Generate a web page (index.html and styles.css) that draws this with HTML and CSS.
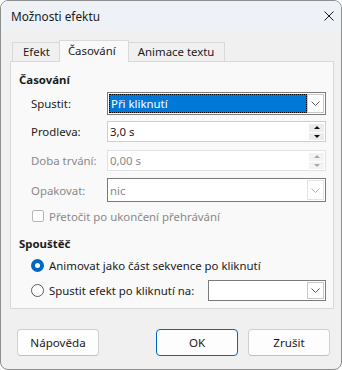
FILE: index.html
```html
<!DOCTYPE html>
<html lang="cs">
<head>
  <meta charset="UTF-8">
  <title>Možnosti efektu</title>
  <link rel="stylesheet" href="styles.css">
</head>
<body>
  <div class="dialog">
    <!-- titulek okna -->
    <div class="titlebar">
      <span class="title">Možnosti efektu</span>
      <svg class="close" width="10" height="10" viewBox="0 0 10 10">
        <path d="M0.5 0.5 L9.5 9.5 M9.5 0.5 L0.5 9.5" stroke="#1c1c1c" stroke-width="1" fill="none"/>
      </svg>
    </div>

    <div class="content">
      <!-- záložky -->
      <div class="tabs">
        <div class="tab">Efekt</div>
        <div class="tab active">Časování</div>
        <div class="tab">Animace textu</div>
      </div>

      <div class="panel">
        <div class="heading">Časování</div>

        <div class="row row-start">
          <span class="label">Spustit:</span>
          <div class="combo combo-dark">
            <div class="combo-value selected"><span>Při kliknutí</span></div>
            <div class="combo-btn">
              <svg width="9" height="5" viewBox="0 0 9 5"><path d="M0.5 0.5 L4.5 4.5 L8.5 0.5" stroke="#5a5a5a" fill="none"/></svg>
            </div>
          </div>
        </div>

        <div class="row row-delay">
          <span class="label">Prodleva:</span>
          <div class="spin">
            <div class="spin-value">3,0 s</div>
            <div class="spin-btns">
              <div class="spin-btn"><span class="tri-up"></span></div>
              <div class="spin-btn"><span class="tri-down"></span></div>
            </div>
          </div>
        </div>

        <div class="row row-dur disabled">
          <span class="label">Doba trvání:</span>
          <div class="spin spin-off">
            <div class="spin-value">0,00 s</div>
            <div class="spin-btns">
              <div class="spin-btn"><span class="tri-up"></span></div>
              <div class="spin-btn"><span class="tri-down"></span></div>
            </div>
          </div>
        </div>

        <div class="row row-repeat disabled">
          <span class="label">Opakovat:</span>
          <div class="combo combo-dark">
            <div class="combo-value plain">nic</div>
            <div class="combo-btn combo-btn-off">
              <svg width="9" height="5" viewBox="0 0 9 5"><path d="M0.5 0.5 L4.5 4.5 L8.5 0.5" stroke="#b0b0b0" fill="none"/></svg>
            </div>
          </div>
        </div>

        <div class="check-row disabled">
          <span class="checkbox"></span>
          <span>Přetočit po ukončení přehrávání</span>
        </div>

        <div class="heading heading-trigger">Spouštěč</div>

        <div class="radio-row radio-first">
          <span class="radio on"></span>
          <span>Animovat jako část sekvence po kliknutí</span>
        </div>
        <div class="radio-row radio-second">
          <span class="radio"></span>
          <span class="radio-text">Spustit efekt po kliknutí na:</span>
          <div class="combo combo-trigger">
            <div class="combo-value plain"></div>
            <div class="combo-btn">
              <svg width="9" height="5" viewBox="0 0 9 5"><path d="M0.5 0.5 L4.5 4.5 L8.5 0.5" stroke="#5a5a5a" fill="none"/></svg>
            </div>
          </div>
        </div>
      </div>

      <!-- tlačítka -->
      <div class="buttons">
        <button class="btn">Nápověda</button>
        <div class="btn-group">
          <button class="btn btn-default">OK</button>
          <button class="btn">Zrušit</button>
        </div>
      </div>
    </div>
  </div>
</body>
</html>
```

FILE: styles.css
```css
/* základ */
body {
  margin: 0;
  font-family: "Noto Sans", "Open Sans", sans-serif;
  font-size: 11.4px;
  color: #1b1b1b;
}

/* okno dialogu */
.dialog {
  width: 342px;
  height: 370px;
  box-sizing: border-box;
  border: 1px solid #8e8e8e;
  border-radius: 8px;
  background: #f0f0f0;
  overflow: hidden;
}

.titlebar {
  height: 29px;
  display: flex;
  align-items: center;
  justify-content: space-between;
  padding: 0 7px 0 10px;
  background: #eef2f7;
}
.title {
  font-size: 11.8px;
  color: #1a1a1a;
}

.content {
  padding: 10px 7px 0 9px;
}

/* záložky */
.tabs {
  display: flex;
  align-items: flex-end;
  height: 21px;
  padding-left: 2px;
}
.tab {
  height: 19px;
  box-sizing: border-box;
  padding: 0 10px;
  border: 1px solid #d9d9d9;
  border-bottom: none;
  line-height: 18px;
  background: #f0f0f0;
  color: #1b1b1b;
}
.tab + .tab {
  border-left: none;
}
.tab.active {
  height: 22px;
  margin: 0 -1px -1px -2px;
  padding: 0 12px 0 8px;
  border-left: 1px solid #d9d9d9;
  background: #f9f9f9;
  position: relative;
  z-index: 1;
  line-height: 19px;
}
.tab.active + .tab {
  border-left: none;
}

.panel {
  height: 248px;
  box-sizing: border-box;
  border: 1px solid #d9d9d9;
  background: #f9f9f9;
  padding: 10px 7px 0 8px;
}

.heading {
  height: 16px;
  line-height: 16px;
  font-weight: bold;
}
.heading-trigger {
  margin-top: 12px;
}

/* řádky s poli */
.row {
  display: flex;
  align-items: center;
  padding-left: 12px;
}
.row .label {
  width: 76px;
  flex: none;
}
.row-start { margin-top: 4px; height: 23px; }
.row-delay { margin-top: 6px; height: 21px; }
.row-dur { margin-top: 8px; height: 21px; }
.row-repeat { margin-top: 7px; height: 24px; }

.disabled {
  color: #8a8a8a;
}

.combo {
  flex: 1;
  height: 100%;
  box-sizing: border-box;
  display: flex;
  background: #fff;
  border: 1px solid #a0a0a0;
}
.combo-dark {
  border-color: #7a7a7a;
}
.combo-value {
  flex: 1;
  display: flex;
  align-items: center;
  padding-left: 1px;
}
.combo-value.selected {
  margin: 1px 0 1px 1px;
  padding-left: 1px;
  background: #0078d7;
  color: #fff;
  border: 1px dotted #000;
}
.combo-value.plain {
  padding-left: 2px;
}
.combo-btn {
  width: 17px;
  flex: none;
  display: flex;
  align-items: center;
  justify-content: center;
  margin: 1px 1px 1px 0;
  border: 1px solid #c8c8c8;
  box-sizing: border-box;
  background: #fff;
}
.combo-btn-off {
  border-color: #e4e4e4;
}

/* číselník */
.spin {
  flex: 1;
  height: 100%;
  box-sizing: border-box;
  display: flex;
  background: #fff;
  border: 1px solid #cfcfcf;
}
.spin-off {
  border-color: #e2e2e2;
}
.spin-value {
  flex: 1;
  display: flex;
  align-items: center;
  padding-left: 2px;
}
.spin-btns {
  width: 15px;
  display: flex;
  flex-direction: column;
  gap: 1px;
  padding: 2px 1px 1px 0;
}
.spin-btn {
  flex: 1;
  background: #ececec;
  display: flex;
  align-items: center;
  justify-content: center;
}
.tri-up, .tri-down {
  width: 0;
  height: 0;
  border-left: 3px solid transparent;
  border-right: 3px solid transparent;
}
.tri-up { border-bottom: 3px solid #111; }
.tri-down { border-top: 3px solid #111; }
.spin-off .tri-up { border-bottom-color: #a8a8a8; }
.spin-off .tri-down { border-top-color: #a8a8a8; }
.spin-off .spin-btn { background: #f3f3f3; }

/* zaškrtávátko */
.check-row {
  display: flex;
  align-items: center;
  gap: 5px;
  height: 16px;
  margin-top: 6px;
  padding-left: 13px;
}
.checkbox {
  width: 12px;
  height: 12px;
  box-sizing: border-box;
  border: 1px solid #b8b8b8;
  border-radius: 2px;
  background: #fff;
}

/* přepínače */
.radio-row {
  display: flex;
  align-items: center;
  gap: 5px;
  padding-left: 12px;
}
.radio-first { margin-top: 4px; height: 18px; }
.radio-second { margin-top: 6px; height: 21px; }
.radio {
  width: 13px;
  height: 13px;
  box-sizing: border-box;
  border-radius: 50%;
  border: 1px solid #5c5c5c;
  background: #fff;
  flex: none;
}
.radio.on {
  border: 4px solid #0067c0;
}
.radio-text {
  width: 154px;
}
.combo-trigger {
  border-color: #7a7a7a;
}

/* tlačítka dole */
.buttons {
  display: flex;
  justify-content: space-between;
  margin-top: 20px;
  padding: 0 4px 0 7px;
}
.btn-group {
  display: flex;
  gap: 10px;
}
.btn {
  width: 82px;
  height: 27px;
  box-sizing: border-box;
  font-family: inherit;
  font-size: 11.6px;
  color: #1b1b1b;
  background: #fdfdfd;
  border: 1px solid #d0d0d0;
  border-bottom-color: #c0c0c0;
  border-radius: 4px;
}
.btn-default {
  border: 1px solid #0067c0;
}
```
